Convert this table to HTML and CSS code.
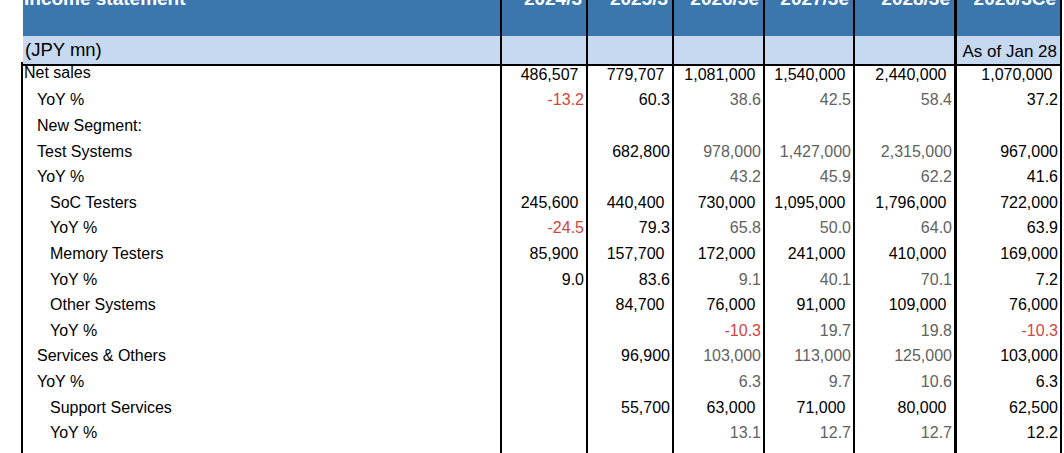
FILE: index.html
```html
<!DOCTYPE html>
<html lang="en">
<head>
<meta charset="utf-8">
<title>Income statement</title>
<link rel="stylesheet" href="styles.css">
</head>
<body>
<div class="sheet">
  <div class="row head">
    <div>Income statement</div>
    <div>2024/3</div>
    <div>2025/3</div>
    <div>2026/3e</div>
    <div>2027/3e</div>
    <div>2028/3e</div>
    <div>2026/3Ce</div>
  </div>
  <div class="row sub">
    <div class="unit">(JPY mn)</div>
    <div></div>
    <div></div>
    <div></div>
    <div></div>
    <div></div>
    <div class="asof">As of Jan 28</div>
  </div>

  <div class="row r">
    <div class="l0 raise">Net sales</div>
    <div class="p">486,507</div>
    <div class="p">779,707</div>
    <div class="p">1,081,000</div>
    <div class="p">1,540,000</div>
    <div class="p">2,440,000</div>
    <div class="p">1,070,000</div>
  </div>
  <div class="row r">
    <div class="i1">YoY %</div>
    <div class="neg">-13.2</div>
    <div>60.3</div>
    <div class="g">38.6</div>
    <div class="g">42.5</div>
    <div class="g">58.4</div>
    <div>37.2</div>
  </div>
  <div class="row r">
    <div class="i1">New Segment:</div>
    <div></div><div></div><div></div><div></div><div></div><div></div>
  </div>
  <div class="row r">
    <div class="i1">Test Systems</div>
    <div></div>
    <div>682,800</div>
    <div class="g">978,000</div>
    <div class="g">1,427,000</div>
    <div class="g">2,315,000</div>
    <div>967,000</div>
  </div>
  <div class="row r">
    <div class="i1">YoY %</div>
    <div></div>
    <div></div>
    <div class="g">43.2</div>
    <div class="g">45.9</div>
    <div class="g">62.2</div>
    <div>41.6</div>
  </div>
  <div class="row r">
    <div class="i2">SoC Testers</div>
    <div class="p">245,600</div>
    <div class="p">440,400</div>
    <div class="p">730,000</div>
    <div class="p">1,095,000</div>
    <div class="p">1,796,000</div>
    <div>722,000</div>
  </div>
  <div class="row r">
    <div class="i2">YoY %</div>
    <div class="neg">-24.5</div>
    <div>79.3</div>
    <div class="g">65.8</div>
    <div class="g">50.0</div>
    <div class="g">64.0</div>
    <div>63.9</div>
  </div>
  <div class="row r">
    <div class="i2">Memory Testers</div>
    <div class="p">85,900</div>
    <div class="p">157,700</div>
    <div class="p">172,000</div>
    <div class="p">241,000</div>
    <div class="p">410,000</div>
    <div>169,000</div>
  </div>
  <div class="row r">
    <div class="i2">YoY %</div>
    <div>9.0</div>
    <div>83.6</div>
    <div class="g">9.1</div>
    <div class="g">40.1</div>
    <div class="g">70.1</div>
    <div>7.2</div>
  </div>
  <div class="row r">
    <div class="i2">Other Systems</div>
    <div></div>
    <div class="p">84,700</div>
    <div class="p">76,000</div>
    <div class="p">91,000</div>
    <div class="p">109,000</div>
    <div>76,000</div>
  </div>
  <div class="row r">
    <div class="i2">YoY %</div>
    <div></div>
    <div></div>
    <div class="neg">-10.3</div>
    <div class="g">19.7</div>
    <div class="g">19.8</div>
    <div class="neg">-10.3</div>
  </div>
  <div class="row r">
    <div class="i1">Services &amp; Others</div>
    <div></div>
    <div>96,900</div>
    <div class="g">103,000</div>
    <div class="g">113,000</div>
    <div class="g">125,000</div>
    <div>103,000</div>
  </div>
  <div class="row r">
    <div class="i1">YoY %</div>
    <div></div>
    <div></div>
    <div class="g">6.3</div>
    <div class="g">9.7</div>
    <div class="g">10.6</div>
    <div>6.3</div>
  </div>
  <div class="row r">
    <div class="i2">Support Services</div>
    <div></div>
    <div>55,700</div>
    <div class="p">63,000</div>
    <div class="p">71,000</div>
    <div class="p">80,000</div>
    <div>62,500</div>
  </div>
  <div class="row r">
    <div class="i2">YoY %</div>
    <div></div>
    <div></div>
    <div class="g">13.1</div>
    <div class="g">12.7</div>
    <div class="g">12.7</div>
    <div>12.2</div>
  </div>
  <div class="row r last">
    <div class="i2">Others</div>
    <div></div>
    <div>41,200</div>
    <div class="g">40,000</div>
    <div class="g">42,000</div>
    <div class="g">45,000</div>
    <div>40,500</div>
  </div>
</div>
</body>
</html>
```

FILE: styles.css
```css
html, body {
  margin: 0;
  padding: 0;
  background: #ffffff;
}

body {
  font-family: "Liberation Sans", Arial, sans-serif;
  color: #000000;
  overflow: hidden;
}

.sheet {
  margin: -13px 0 0 21px;
  width: 1041px;
}

.row {
  display: grid;
  grid-template-columns: 481px 86px 86px 91px 90px 102px 105px;
}

.row > div {
  box-sizing: border-box;
  border-right: 2px solid #000000;
  white-space: nowrap;
}

.row > div:nth-child(6) {
  border-right-width: 3px;
}

/* Title band */
.head {
  height: 49px;
}

.head > div {
  background: #3b76ad;
  color: #ffffff;
  font-weight: bold;
  font-size: 19px;
  line-height: 22px;
  text-align: right;
  padding: 1px 4px 0 0;
}

.head > div:first-child {
  text-align: left;
  padding-left: 1px;
  border-left: 2px solid #ffffff;
}

/* Unit band */
.sub {
  height: 26px;
}

.sub > div {
  background: #c6d9f0;
  border-bottom: 2px solid #000000;
  line-height: 24px;
}

.sub > div:first-child {
  border-left: 2px solid #ffffff;
}

.unit {
  font-size: 18.5px;
  padding: 2px 0 0 2px;
}

.asof {
  font-size: 17px;
  text-align: right;
  padding: 3.5px 3px 0 0;
}

/* Body rows */
.r {
  height: 25.6px;
  font-size: 16px;
}

.r > div {
  display: flex;
  align-items: center;
  justify-content: flex-end;
  padding-right: 2px;
}

.r > div:first-child {
  justify-content: flex-start;
  border-left: 2px solid #000000;
  padding-right: 0;
}

.r > div.p {
  padding-right: 7.5px;
}

.r.last > div {
  padding-top: 6px;
}

.l0 { padding-left: 1px; }
.i1 { padding-left: 14px; }
.i2 { padding-left: 27px; }

.raise { padding-bottom: 3px; }

.g { color: #626262; }
.neg { color: #d0453f; }
```
